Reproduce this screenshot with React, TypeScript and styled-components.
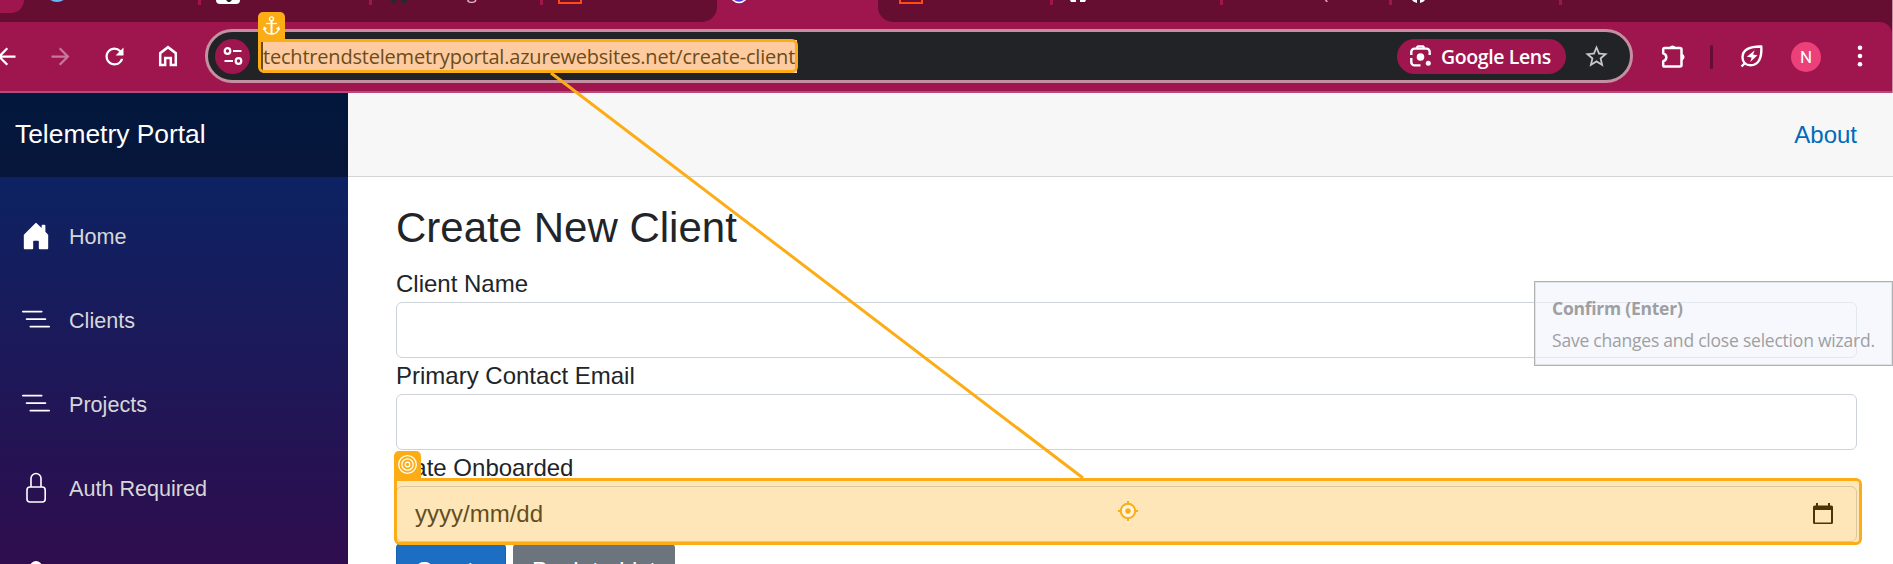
import React from "react";
import styled, { createGlobalStyle } from "styled-components";
import { MdArrowBack, MdArrowForward, MdRefresh, MdStarOutline } from "react-icons/md";
import { BsListNested } from "react-icons/bs";

const wine = "#9f154d";
const darkWine = "#650e32";
const amber = "#fcad15";
const uiFont = '"Open Sans", "Noto Sans", sans-serif';

const GlobalStyle = createGlobalStyle`
  * { box-sizing: border-box; }
  body { margin: 0; background: #fff; overflow: hidden; font-family: "Liberation Sans", Arial, sans-serif; }
  svg { display: block; flex: none; }
`;

const Page = styled.div`
  position: relative;
  width: 1893px;
  height: 564px;
  overflow: hidden;
  display: flex;
  flex-direction: column;
`;

/* Browser chrome */
const TabStrip = styled.div`
  flex: none;
  height: 22px;
  display: flex;
  background: ${wine};
  border-right: 1px solid #b98a9b;
  overflow: hidden;
`;
const TabGroup = styled.div<{ $w: number; $side: "left" | "right" }>`
  width: ${(p) => p.$w}px;
  height: 22px;
  flex: none;
  background: ${darkWine};
  border-radius: ${(p) => (p.$side === "left" ? "0 0 15px 0" : "0 0 0 15px")};
  overflow: hidden;
`;
const ActiveTab = styled.div`
  width: 161px;
  flex: none;
`;
const TabArt = styled.svg`
  font-family: ${uiFont};
  font-size: 18px;
`;

const ToolbarBack = styled.div`
  flex: none;
  background: ${darkWine};
  border-right: 1px solid #cf8ba6;
`;
const Toolbar = styled.div`
  height: 71px;
  padding: 7px 5px 0 0;
  border-bottom: 2px solid #b84a77;
  border-top-right-radius: 12px;
  background: ${wine};
  color: #fff;
  display: flex;
  align-items: flex-start;
`;
const Slot = styled.div<{ $dim?: boolean }>`
  width: 54px;
  height: 54px;
  flex: none;
  display: flex;
  align-items: center;
  justify-content: center;
  opacity: ${(p) => (p.$dim ? 0.42 : 1)};
`;
const NavButtons = styled.div`
  display: flex;
  flex: none;
  margin: 0 10px 0 -21px;
`;
const Omnibox = styled.div`
  width: 1428px;
  height: 54px;
  flex: none;
  margin-right: 13px;
  border: 3px solid #c48fa1;
  border-radius: 27px;
  background: #222327;
  display: flex;
  align-items: center;
  padding: 0 20px 0 7px;
`;
const SiteInfo = styled.div`
  width: 35px;
  height: 35px;
  border-radius: 50%;
  background: ${wine};
  display: flex;
  align-items: center;
  justify-content: center;
`;
const Address = styled.div`
  margin-left: 11px;
  width: 536px;
  height: 33px;
  line-height: 33px;
  background: #ffd8dd;
  border-left: 2px solid #2a1f22;
  color: #2b2320;
  font-family: ${uiFont};
  font-size: 20px;
  letter-spacing: -0.2px;
  white-space: nowrap;
`;
const LensChip = styled.div`
  margin-left: auto;
  width: 169px;
  height: 35px;
  border-radius: 18px;
  background: ${wine};
  display: flex;
  align-items: center;
  padding-left: 12px;
  gap: 9px;
  font: 600 19.5px/35px ${uiFont};
  letter-spacing: -0.4px;
  white-space: nowrap;
`;
const StarWrap = styled.div`
  margin-left: 17px;
  color: #c7c7c7;
`;
const Divider = styled.div`
  width: 3px;
  height: 24px;
  margin: 16px 12px 0 10px;
  border-radius: 2px;
  background: ${darkWine};
  flex: none;
`;
const Avatar = styled.div`
  width: 30px;
  height: 30px;
  margin-top: 1px;
  border-radius: 50%;
  background: #ec407a;
  text-align: center;
  font: 17px/30px Roboto, sans-serif;
`;

/* Application */
const AppBody = styled.div`
  flex: 1;
  display: flex;
  min-height: 0;
`;
const Sidebar = styled.aside`
  width: 348px;
  flex: none;
  background: linear-gradient(180deg, rgb(5, 39, 103) 0, #3a0647 596px);
`;
const Brand = styled.div`
  height: 84px;
  padding-left: 15px;
  background: linear-gradient(#02173d, #07163a);
  color: #fff;
  font-size: 26.4px;
  line-height: 82px;
`;
const NavList = styled.nav`
  padding: 24px 0 0 21px;
  display: flex;
  flex-direction: column;
  gap: 12px;
`;
const NavItem = styled.div`
  height: 72px;
  flex: none;
  display: flex;
  align-items: center;
  gap: 18px;
  font-size: 21.6px;
  color: #d7d7d7;
  svg { color: #fff; margin-top: -2px; }
`;
const Main = styled.main`
  flex: 1;
  background: #fff;
`;
const TopRow = styled.header`
  height: 84px;
  border-bottom: 1px solid #d6d5d5;
  background: #f7f7f7;
  display: flex;
  justify-content: flex-end;
  align-items: center;
  padding-right: 36px;
  color: #006bb7;
  font-size: 24px;
`;
const Content = styled.section`
  padding: 26px 36px 0 48px;
  color: #212529;
`;
const Title = styled.h1`
  margin: 0 0 13px;
  font-size: 42px;
  font-weight: 400;
  line-height: 50px;
`;
const Label = styled.label`
  display: block;
  font-size: 24px;
  line-height: 36px;
`;
const Field = styled.div`
  height: 56px;
  border: 1px solid #ced2d9;
  border-radius: 6px;
  display: flex;
  align-items: center;
  justify-content: space-between;
  padding: 0 23px 0 18px;
  font-size: 24px;
`;
const Buttons = styled.div`
  display: flex;
  gap: 7px;
`;
const Button = styled.button<{ $tone: "primary" | "secondary" }>`
  height: 57px;
  padding: 0;
  width: ${(p) => (p.$tone === "primary" ? 110 : 162)}px;
  border: 1px solid ${(p) => (p.$tone === "primary" ? "#1861ac" : "#6c757d")};
  border-radius: 6px;
  background: ${(p) => (p.$tone === "primary" ? "#1b6ec2" : "#6c757d")};
  color: #fff;
  font: 24px/36px "Liberation Sans", Arial, sans-serif;
`;

/* Selection wizard, drawn above the page */
const Selection = styled.div<{ $x: number; $y: number; $w: number; $h: number }>`
  position: absolute;
  left: ${(p) => p.$x}px;
  top: ${(p) => p.$y}px;
  width: ${(p) => p.$w}px;
  height: ${(p) => p.$h}px;
  border: 3px solid ${amber};
  border-radius: 0 6px 6px 6px;
  background: rgba(252, 173, 21, 0.3);
  background-clip: padding-box;
  display: flex;
  align-items: center;
  justify-content: center;
  padding-bottom: 1px;
`;
const Tag = styled.div`
  position: absolute;
  left: -3px;
  top: -30px;
  width: 27px;
  height: 28px;
  border-radius: 5px 5px 0 0;
  background: ${amber};
  display: flex;
  justify-content: center;
  padding-top: 4px;
`;
const Connector = styled.svg`
  position: absolute;
  left: 0;
  top: 0;
`;
const Tooltip = styled.div`
  position: absolute;
  left: 1534px;
  top: 281px;
  width: 359px;
  height: 85px;
  border: 1px solid #b0b1b3;
  box-shadow: inset 0 0 0 1px #e1e3e7;
  background: rgba(241, 244, 251, 0.62);
  padding: 10px 0 0 17px;
  font: 17.5px/32px ${uiFont};
  color: #9f9fa1;
  white-space: nowrap;
`;
const TooltipTitle = styled.div`
  font-weight: 700;
  letter-spacing: -0.25px;
`;
const TooltipText = styled.div`
  letter-spacing: -0.22px;
`;

const separator = (x: number) => <rect key={x} x={x} y="0" width="3" height="5" fill={wine} />;

const HomeOutline = () => (
  <svg width="20" height="22" viewBox="0 0 20 22" fill="none" stroke="#fff" strokeWidth="2.5">
    <path d="M2.2 20V8.2L10 2.2l7.8 6V20h-5v-7H7.2v7z" />
  </svg>
);
const TuneIcon = () => (
  <svg width="20" height="18" viewBox="0 0 20 18" fill="none" stroke="#fff" strokeWidth="2.2">
    <circle cx="4.5" cy="4" r="2.8" />
    <path d="M10 4h8.5M1.5 14H10" />
    <circle cx="15.5" cy="14" r="2.8" />
  </svg>
);
const LensIcon = () => (
  <svg width="23" height="22" viewBox="0 0 23 22" fill="none" stroke="#fff" strokeWidth="2.4">
    <path d="M2.3 10V6.8a3.2 3.2 0 0 1 3.2-3.2h12a3.2 3.2 0 0 1 3.2 3.2V10M2.3 13v4.2a3.2 3.2 0 0 0 3.2 3.2h6" />
    <path d="M7.5 3 9 1.4h5L15.5 3" />
    <circle cx="11.5" cy="12" r="3.8" fill="#fff" stroke="none" />
    <circle cx="19.3" cy="18.3" r="2.5" fill="#fff" stroke="none" />
  </svg>
);
const PuzzleIcon = () => (
  <svg width="26" height="26" viewBox="0 0 26 26" fill="none">
    <path
      d="M4.5 5H20a1.5 1.5 0 0 1 1.5 1.5V22a1.5 1.5 0 0 1-1.5 1.5H4.5a1.3 1.3 0 0 1-1.3-1.3v-4a4 4 0 0 0 0-7.8v-4A1.3 1.3 0 0 1 4.5 5z"
      stroke="#fff"
      strokeWidth="2.5"
      strokeLinejoin="round"
    />
    <path d="M9.5 4.5a3.2 3.2 0 0 1 6 0zM22 10.8a3.4 3.4 0 0 1 0 6.6z" fill="#fff" />
  </svg>
);
const LeafIcon = () => (
  <svg width="24" height="24" viewBox="0 0 24 24" fill="none" stroke="#fff" strokeWidth="2.4">
    <path d="M21.3 2.5C10 2.3 2.5 5.5 2.5 13.3c0 5 3.5 8 8 8 8 0 11.5-7.3 10.8-18.8z" strokeLinejoin="round" />
    <path d="M1.5 22.5 5 19" />
    <path d="m14.8 6.3-8 6.5 4.8.7-1.3 4.5 7.2-6.8-4.5-.7z" fill="#fff" stroke="none" />
  </svg>
);
const HouseFill = () => (
  <svg width="30" height="30" viewBox="0 0 16 16" fill="#fff">
    <path d="M6.5 14.5v-3.505c0-.245.25-.495.5-.495h2c.25 0 .5.25.5.5v3.5a.5.5 0 0 0 .5.5h4a.5.5 0 0 0 .5-.5v-7a.5.5 0 0 0-.146-.354L13 5.793V2.5a.5.5 0 0 0-.5-.5h-1a.5.5 0 0 0-.5.5v1.293L8.354 1.146a.5.5 0 0 0-.708 0l-6 6A.5.5 0 0 0 1.5 7.5v7a.5.5 0 0 0 .5.5h4a.5.5 0 0 0 .5-.5Z" />
  </svg>
);
const LockIcon = () => (
  <svg width="30" height="32" viewBox="0 0 30 32" fill="none" stroke="#fff" strokeWidth="1.6">
    <path d="M10 15V6.5a5 5 0 0 1 10 0V15" />
    <rect x="6" y="15" width="18.2" height="15" rx="3" />
  </svg>
);
const CalendarIcon = () => (
  <svg width="20" height="22" viewBox="0 0 20 22">
    <path
      d="M1.5 2.5H3V0h2v2.5h10V0h2v2.5h1.5A1.5 1.5 0 0 1 20 4v15.5a1.5 1.5 0 0 1-1.5 1.5h-17A1.5 1.5 0 0 1 0 19.5V4a1.5 1.5 0 0 1 1.5-1.5zM2 7v12.5h16V7z"
      fill="#000"
      fillRule="evenodd"
    />
  </svg>
);
const AnchorIcon = () => (
  <svg width="17" height="20" viewBox="0 0 17 20" fill="none" stroke="#fff" strokeWidth="1.3">
    <circle cx="8.5" cy="2.8" r="2" />
    <path d="M3 7.5h11" />
    <path d="M1.3 11.5c.3 4 3.2 6.5 7.2 6.5s6.900-2.500 7.200-6.500M.5 14l.8-2.600L3.500 13M16.500 14l-.8-2.600L13.500 13" />
    <path d="M8.5 5v13" strokeWidth="2" />
  </svg>
);
const TargetIcon = () => (
  <svg width="19" height="19" viewBox="0 0 19 19" fill="none" stroke="#fff" strokeWidth="1.3">
    <circle cx="9.5" cy="9.5" r="8.8" />
    <circle cx="9.5" cy="9.5" r="5.7" />
    <circle cx="9.5" cy="9.5" r="2.3" />
  </svg>
);
const CrosshairIcon = () => (
  <svg width="20" height="20" viewBox="0 0 20 20" fill="none" stroke={amber} strokeWidth="2">
    <circle cx="10" cy="10" r="7.2" fill="#fdf3df" />
    <circle cx="10" cy="10" r="2.7" fill={amber} stroke="none" />
    <path d="M10 0v3M10 17v3M0 10h3M17 10h3" />
  </svg>
);

export default function App() {
  return (
    <Page>
      <GlobalStyle />
      <TabStrip>
        <TabGroup $w={717} $side="left">
          <TabArt width="717" height="22">
            <path d="M0 0h24a13 13 0 0 1-13 13H0z" fill={wine} />
            <circle cx="57" cy="-10" r="12" fill="#6bb6f2" />
            <rect x="216" y="-20" width="24" height="24" rx="4" fill="#fff" />
            <path d="M226 0h6l-2 2h-2z" fill="#222" />
            <path d="M390 0h6v4q-4-1-6-4zM402 0h6q-2 3-6 4z" fill="#24292e" />
            <text x="467" y="-1" fill="#dfb7c7">g</text>
            <rect x="559" y="-19" width="22" height="22" fill="none" stroke="#ff4a14" strokeWidth="2" />
            {[198, 369, 540].map(separator)}
          </TabArt>
        </TabGroup>
        <ActiveTab>
          <TabArt width="161" height="22">
            <circle cx="22" cy="-6" r="8.5" fill="#5a35d6" stroke="#fff" strokeWidth="1.5" />
          </TabArt>
        </ActiveTab>
        <TabGroup $w={1014} $side="right">
          <TabArt width="1014" height="22">
            <rect x="22" y="-19" width="22" height="22" fill="none" stroke="#ff4a14" strokeWidth="2" />
            <path d="M192 0h6v2h-5zM202 0h6l-1 2h-5z" fill="#fff" />
            <text x="445" y="-1" fill="#dfb7c7">(</text>
            <path d="M534 0h5v3q-4-1-5-3zM542 0h5q-1 2-5 3z" fill="#fff" />
            {[172, 342, 511, 681].map(separator)}
          </TabArt>
        </TabGroup>
      </TabStrip>
      <ToolbarBack>
        <Toolbar>
          <NavButtons>
            <Slot><MdArrowBack size={27} /></Slot>
            <Slot $dim><MdArrowForward size={27} /></Slot>
            <Slot><MdRefresh size={27} /></Slot>
            <Slot><HomeOutline /></Slot>
          </NavButtons>
          <Omnibox>
            <SiteInfo><TuneIcon /></SiteInfo>
            <Address>techtrendstelemetryportal.azurewebsites.net/create-client</Address>
            <LensChip><LensIcon />Google Lens</LensChip>
            <StarWrap><MdStarOutline size={27} /></StarWrap>
          </Omnibox>
          <Slot><PuzzleIcon /></Slot>
          <Divider />
          <Slot><LeafIcon /></Slot>
          <Slot><Avatar>N</Avatar></Slot>
          <Slot>
            <svg width="6" height="22" fill="#fff">
              <circle cx="3" cy="2.7" r="2.3" />
              <circle cx="3" cy="11" r="2.3" />
              <circle cx="3" cy="19.3" r="2.3" />
            </svg>
          </Slot>
        </Toolbar>
      </ToolbarBack>

      <AppBody>
        <Sidebar>
          <Brand>Telemetry Portal</Brand>
          <NavList>
            <NavItem><HouseFill />Home</NavItem>
            <NavItem><BsListNested size={30} />Clients</NavItem>
            <NavItem><BsListNested size={30} />Projects</NavItem>
            <NavItem><LockIcon />Auth Required</NavItem>
            <NavItem>
              <svg width="30" height="30" fill="#fff">
                <circle cx="15" cy="10" r="6" />
                <path d="M4 28q0-10 11-10t11 10z" />
              </svg>
            </NavItem>
          </NavList>
        </Sidebar>
        <Main>
          <TopRow>About</TopRow>
          <Content>
            <Title>Create New Client</Title>
            <Label>Client Name</Label>
            <Field />
            <Label>Primary Contact Email</Label>
            <Field />
            <Label>Date Onboarded</Label>
            <Field>yyyy/mm/dd<CalendarIcon /></Field>
            <Buttons>
              <Button $tone="primary">Create</Button>
              <Button $tone="secondary">Back to List</Button>
            </Buttons>
          </Content>
        </Main>
      </AppBody>

      <Connector width="1893" height="564">
        <path d="M551 73 1083 478" stroke={amber} strokeWidth="3" />
      </Connector>
      <Selection $x={258} $y={39} $w={540} $h={34}>
        <Tag><AnchorIcon /></Tag>
      </Selection>
      <Selection $x={394} $y={478} $w={1468} $h={67}>
        <Tag><TargetIcon /></Tag>
        <CrosshairIcon />
      </Selection>
      <Tooltip>
        <TooltipTitle>Confirm (Enter)</TooltipTitle>
        <TooltipText>Save changes and close selection wizard.</TooltipText>
      </Tooltip>
    </Page>
  );
}
